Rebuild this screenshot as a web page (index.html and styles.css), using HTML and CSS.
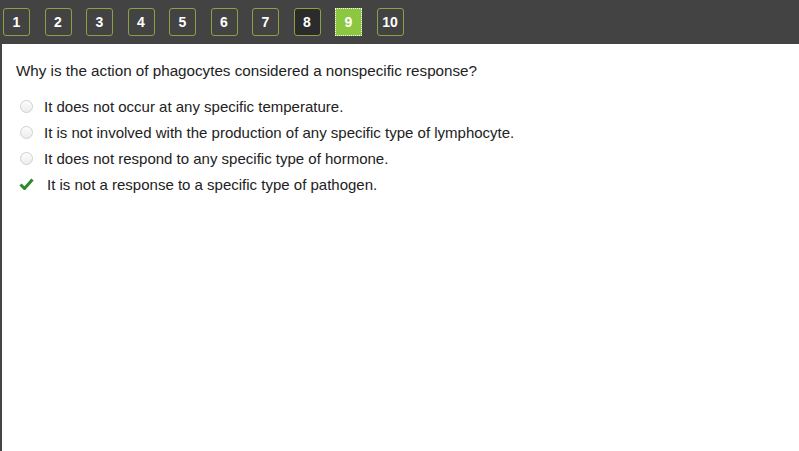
FILE: index.html
```html
<!DOCTYPE html>
<html>
<head>
<meta charset="utf-8">
<link rel="stylesheet" href="styles.css">
</head>
<body>
<div class="bar">
  <span class="num">1</span>
  <span class="num">2</span>
  <span class="num">3</span>
  <span class="num">4</span>
  <span class="num">5</span>
  <span class="num">6</span>
  <span class="num">7</span>
  <span class="num dark">8</span>
  <span class="num active">9</span>
  <span class="num">10</span>
</div>
<div class="main">
  <p class="question">Why is the action of phagocytes considered a nonspecific response?</p>
  <ul class="options">
    <li class="opt"><span class="radio"></span><span>It does not occur at any specific temperature.</span></li>
    <li class="opt"><span class="radio"></span><span>It is not involved with the production of any specific type of lymphocyte.</span></li>
    <li class="opt"><span class="radio"></span><span>It does not respond to any specific type of hormone.</span></li>
    <li class="opt correct"><svg class="check" width="15" height="12" viewBox="0 0 15 12"><path d="M1.5 6.5 L5.5 10.5 L13.5 1.5" fill="none" stroke="#2a8a2a" stroke-width="3"/></svg><span>It is not a response to a specific type of pathogen.</span></li>
  </ul>
</div>
</body>
</html>
```
FILE: styles.css
```css
html, body {
  margin: 0;
  padding: 0;
  background: #fff;
  font-family: "Liberation Sans", Arial, sans-serif;
}
.bar {
  height: 44px;
  background: #434343;
  display: flex;
  align-items: center;
  padding-left: 3px;
  gap: 14.5px;
}
.num {
  box-sizing: border-box;
  width: 27px;
  height: 28px;
  border: 1px solid #8aa246;
  border-radius: 3px;
  display: flex;
  align-items: center;
  justify-content: center;
  color: #fff;
  font-weight: bold;
  font-size: 14px;
}
.num.dark {
  background: #2b2b2b;
}
.num.active {
  background: #8dc742;
  border: 1px dotted #fff;
  border-radius: 0;
}
.main {
  border-left: 2px solid #444;
  height: 407px;
  padding: 0 0 0 14px;
  box-sizing: border-box;
}
.question {
  margin: 0;
  padding-top: 19px;
  font-size: 15.2px;
  line-height: 16px;
  color: #222;
}
.options {
  list-style: none;
  margin: 14px 0 0 0;
  padding: 0;
}
.opt {
  display: flex;
  align-items: center;
  height: 26px;
  font-size: 15px;
  color: #222;
}
.radio {
  box-sizing: border-box;
  width: 13px;
  height: 13px;
  border: 1px solid #cfcfcf;
  border-radius: 50%;
  background: linear-gradient(#fdfdfd, #ececec);
  margin: 0 11px 0 4px;
}
.check {
  margin: 0 13px 0 3px;
}
```
